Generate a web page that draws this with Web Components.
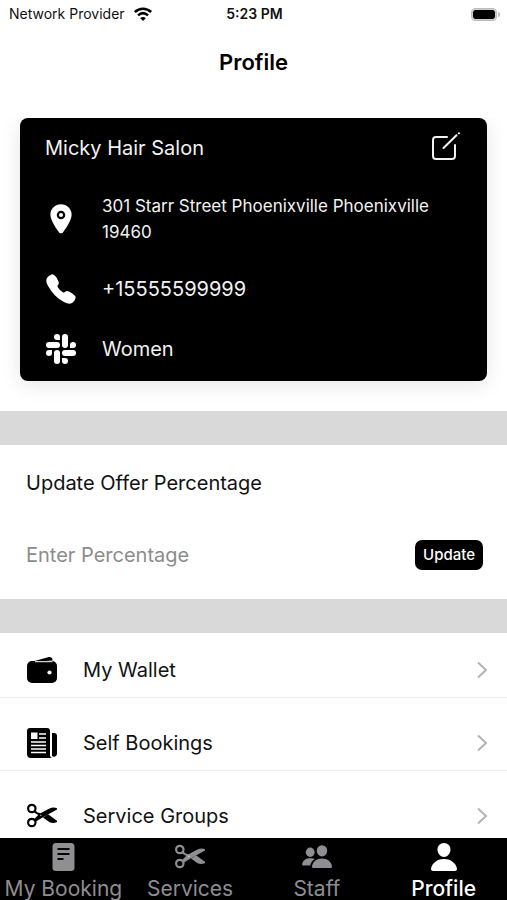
<!DOCTYPE html>
<html lang="en">
<head>
<meta charset="utf-8">
<meta name="viewport" content="width=device-width, initial-scale=1">
<title>Profile</title>
<style>
    html, body {
        height: 100%;
        margin: 0;
    }
    body {
        font-family: Inter, "Liberation Sans", sans-serif;
        font-size: 20px;
        line-height: 26px;
        color: #111;
        background: #fff;
    }
</style>
</head>
<body>
<app-screen>
    <status-bar slot="top" carrier="Network Provider" time="5:23 PM"></status-bar>
    <page-title slot="top">Profile</page-title>

    <salon-card name="Micky Hair Salon">
        <contact-row icon="pin" small>301 Starr Street Phoenixville Phoenixville 19460</contact-row>
        <contact-row icon="phone">+15555599999</contact-row>
        <contact-row icon="slack">Women</contact-row>
    </salon-card>
    <section-band></section-band>
    <offer-form></offer-form>
    <section-band></section-band>
    <menu-list>
        <menu-row icon="wallet">My Wallet</menu-row>
        <menu-row icon="news">Self Bookings</menu-row>
        <menu-row icon="scissors">Service Groups</menu-row>
    </menu-list>

    <tab-bar slot="bottom">
        <tab-item icon="document">My Booking</tab-item>
        <tab-item icon="scissors">Services</tab-item>
        <tab-item icon="people">Staff</tab-item>
        <tab-item icon="person" active>Profile</tab-item>
    </tab-bar>
</app-screen>

<script>
//All the icons live on a 32x32 grid
const icons = {
    pin: `<g transform="scale(.0625)"><circle cx="256" cy="192" r="32"/><path d="M256 20c-94 0-170 72-170 162 0 44 20 98 58 164 30 53 63 98 82 124a37 37 0 0060 0c19-26 52-71 82-124 38-66 58-120 58-164 0-90-76-162-170-162zm0 240a68 68 0 1168-68 68 68 0 01-68 68z"/></g>`,
    phone: `<g transform="scale(.0625)"><path stroke="currentColor" stroke-width="22" d="M391 480c-19.500 0-47-7-88-30-50-28-88.500-54-138-103.400C117 299 93.600 268 61 208.400c-37-67-30.500-102-23.500-117C46 73.400 58 62.600 74 52a176 176 0 0128.700-15.200l2.800-1.200c5-2.200 12.400-5.600 22-2 6.300 2.400 12 7.200 20.800 16 18.200 18 43 57.800 52.200 77.400 6 13.200 10.200 22 10.200 31.700 0 11.500-5.800 20.300-12.700 29.800l-3.900 5.200c-7.600 10-9.300 12.900-8.200 18 2.200 10.400 18.900 41.300 46.200 68.500s57.300 42.900 67.700 45.100c5.400 1.200 8.300-.6 18.700-8.500l4.600-3.400c10.600-8 19-13.600 30.200-13.600 9.800 0 18 4.200 31.900 11.200 18 9 59 33.600 77.100 51.800 8.800 8.800 13.700 14.500 16 20.800 3.600 9.500.2 17-2 22l-1.200 2.700a176 176 0 01-15.300 28.600c-10.600 15.900-21.400 28.200-39.300 36.600A67 67 0 01391 480z"/></g>`,
    slack: `<rect x="17" y="1" width="6" height="14" rx="3"/><path d="M15 7h-3a3 3 0 113-3z"/>
        <rect x="17" y="17" width="14" height="6" rx="3"/><path d="M25 15v-3a3 3 0 113 3z"/>
        <rect x="9" y="17" width="6" height="14" rx="3"/><path d="M17 25h3a3 3 0 11-3 3z"/>
        <rect x="1" y="9" width="14" height="6" rx="3"/><path d="M7 17v3a3 3 0 11-3-3z"/>`,
    edit: `<g fill="none" stroke="currentColor" stroke-width="2" stroke-linecap="round" stroke-linejoin="round"><path d="M17 5H6a3 3 0 00-3 3v16a3 3 0 003 3h16a3 3 0 003-3V13"/><path d="M13.500 16L26.500 3.200"/><path d="M28.800 1.400l.2-.2"/></g>`,
    wallet: `<path d="M4 8.200L22 3.200c2.500-.6 4.500.4 4.700 3.300z"/><path d="M6 7h20a5 5 0 015 5v12a5 5 0 01-5 5H6a5 5 0 01-5-5V12a5 5 0 015-5z"/><path d="M9 7.700h17.500" stroke="#fff" stroke-width="1"/><circle cx="23.500" cy="18.500" r="2.100" fill="#fff"/>`,
    news: `<path d="M4 1h17a3 3 0 013 3v24c0 1.500.8 2.500 2 3H5a4 4 0 01-4-4V4a3 3 0 013-3z"/><path d="M26 6h2a3 3 0 013 3v18a3 3 0 01-5 2z"/>
        <path d="M5 5.500h6.500V12H5z" fill="#fff"/><path d="M13 7h7M13 11h7M5 15h15M5 18.500h15M5 22h15M5 25.500h15" stroke="#fff" stroke-width="1.600"/>`,
    scissors: `<g fill="none" stroke="currentColor" stroke-width="2.200"><circle cx="5.800" cy="8.500" r="3.700"/><circle cx="5.800" cy="22.500" r="3.700"/></g>
        <path d="M8 12.500l1.700-2.500 1.300 2.300 3.500 1L23.500 8.500c2.700-1.300 5.200-1.500 7.500-.2v1.200L16.500 17.500 10 21.500l-2-2.300 4.200-4.200z"/>
        <path d="M17 17.500l5-3.300 9 6.600v1.200c-2.500 1.300-5.200 1.200-7.500.2z"/><circle cx="14.800" cy="15.400" r=".8" fill="#fff" opacity=".6"/>`,
    document: `<path fill-rule="evenodd" d="M9 2h15a3.500 3.500 0 013.500 3.500v21A3.500 3.500 0 0124 30H9a3.500 3.500 0 01-3.500-3.500v-21A3.500 3.500 0 019 2zM10.500 7v2h12V7zm0 5v2h12v-2zm0 5v2h6v-2z"/>`,
    people: `<ellipse cx="21" cy="9.800" rx="5.200" ry="5.600"/><path d="M12.500 27c-1 0-1.700-.8-1.500-1.800C12 20.500 15.500 17.500 21 17.500s9 3 10 7.700c.2 1-.5 1.800-1.500 1.800z"/>
        <ellipse cx="9.200" cy="11.200" rx="4.400" ry="4.700"/><path d="M2.500 24.500c-.9 0-1.500-.7-1.300-1.600C2 19 5 17.200 9.200 17.200c2 0 3.400.3 4.700.9-2.600 1.500-4 3.700-4.700 6.400z"/>`,
    person: `<g transform="scale(.0625)"><path d="M332.600 64.600C313.200 43.600 286 32 256 32c-30.200 0-57.400 11.500-76.800 32.400-19.600 21-29 49.800-26.900 80.800C156.800 206.300 203.300 256 256 256s99.200-49.700 103.700-110.800c2.200-30.700-7.400-59.300-27.100-80.600zM432 480H80a31 31 0 01-24.200-11.100c-6.500-7.800-9-18.400-7.200-29.100C57 393 83.400 353.600 124.800 326c36.800-24.500 83.400-38 131.200-38s94.400 13.500 131.200 38c41.400 27.600 67.700 67 76.200 113.800 2 10.700-.7 21.300-7.200 29A31 31 0 01432 480z"/></g>`,
    chevron: `<path d="M12 8.500l8 7.500-8 7.500" fill="none" stroke="currentColor" stroke-width="2"/>`,
    wifi: `<g fill="none" stroke="currentColor" stroke-width="4.500"><path d="M1.500 12.500c8.500-8 20.500-8 29 0"/><path d="M7 18.500c5.500-5 12.500-5 18 0"/></g><path d="M16 28.500l-5-5c3-2.600 7-2.600 10 0z"/>`
};

//Clone a template into an open shadow root
function attach(host, html) {
    const template = document.createElement("template");
    template.innerHTML = html;
    host.attachShadow({mode: "open"}).appendChild(template.content.cloneNode(true));
}

class UiIcon extends HTMLElement {
    connectedCallback() {
        attach(this, `
        <style>
            :host { display: block; flex: none; width: 32px; height: 32px; }
            svg { display: block; width: 100%; height: 100%; fill: currentColor; }
        </style>
        <svg viewBox="0 0 32 32" aria-hidden="true">${icons[this.getAttribute("name")]}</svg>`);
    }
}

class AppScreen extends HTMLElement {
    constructor() {
        super();
        attach(this, `
        <style>
            :host { display: flex; flex-direction: column; height: 100%; overflow: hidden; }
            main { flex: 1; min-height: 0; overflow: hidden; }
        </style>
        <slot name="top"></slot>
        <main><slot></slot></main>
        <slot name="bottom"></slot>`);
    }
}

class StatusBar extends HTMLElement {
    connectedCallback() {
        attach(this, `
        <style>
            :host {
                display: grid;
                grid-template-columns: 1fr auto 1fr;
                align-items: center;
                height: 28px;
                padding: 0 7px 0 9px;
                font-size: 14px;
                line-height: 20px;
            }
            .carrier { display: flex; align-items: center; gap: 8px; }
            .carrier ui-icon { width: 20px; height: 18px; color: #000; }
            .time { font-weight: 600; }
            .battery { display: flex; align-items: center; justify-content: flex-end; }
            .cell { width: 22px; height: 9px; padding: 1px; border: 1px solid #bbb; border-radius: 4px; background: #000 content-box; box-shadow: inset 0 0 0 1px #ccc; }
            .tip { width: 2px; height: 5px; margin-left: 1px; border-radius: 0 2px 2px 0; background: #bbb; }
        </style>
        <div class="carrier"><span>${this.getAttribute("carrier")}</span><ui-icon name="wifi"></ui-icon></div>
        <div class="time">${this.getAttribute("time")}</div>
        <div class="battery"><div class="cell"></div><div class="tip"></div></div>`);
    }
}

class PageTitle extends HTMLElement {
    constructor() {
        super();
        attach(this, `
        <style>
            :host { display: block; padding: 20px 0 42px; text-align: center; color: #000; }
            h1 { margin: 0; font-size: 22px; line-height: 28px; font-weight: 600; }
        </style>
        <h1><slot></slot></h1>`);
    }
}

class SalonCard extends HTMLElement {
    connectedCallback() {
        attach(this, `
        <style>
            :host { display: block; padding: 0 20px 30px; }
            article {
                padding: 14px 25px 16px;
                border-radius: 8px;
                background: #000;
                color: #f2f2f2;
                box-shadow: 0 4px 20px rgba(0, 0, 0, .1);
            }
            header { display: flex; align-items: center; justify-content: space-between; }
            h2 { margin: 0; font-size: 20px; line-height: 32px; font-weight: 400; }
            button { padding: 0; border: 0; background: none; color: inherit; }
            .rows { display: grid; gap: 28px; margin-top: 29px; }
        </style>
        <article>
            <header>
                <h2>${this.getAttribute("name")}</h2>
                <button type="button" aria-label="Edit profile"><ui-icon name="edit"></ui-icon></button>
            </header>
            <div class="rows"><slot></slot></div>
        </article>`);
    }
}

class ContactRow extends HTMLElement {
    connectedCallback() {
        attach(this, `
        <style>
            :host { display: flex; align-items: center; gap: 25px; line-height: 32px; }
            :host([small]) { font-size: 17px; line-height: 26px; }
            ui-icon { color: #fff; }
        </style>
        <ui-icon name="${this.getAttribute("icon")}"></ui-icon>
        <div><slot></slot></div>`);
    }
}

class SectionBand extends HTMLElement {
    constructor() {
        super();
        attach(this, `<style>:host { display: block; height: 34px; background: #d9d9d9; }</style>`);
    }
}

class OfferForm extends HTMLElement {
    constructor() {
        super();
        attach(this, `
        <style>
            :host { display: block; padding: 25px 24px 29px 26px; }
            form { display: grid; gap: 44px; }
            .field { display: flex; align-items: center; gap: 16px; }
            input {
                flex: 1;
                min-width: 0;
                height: 30px;
                padding: 0;
                border: 0;
                background: none;
                font: inherit;
                color: inherit;
            }
            input::placeholder { color: #8c8c8c; }
            button {
                height: 30px;
                padding: 0 8px;
                border: 0;
                border-radius: 7px;
                background: #000;
                color: #fff;
                font: 500 15px/20px Inter, sans-serif;
            }
        </style>
        <form>
            <label for="percentage">Update Offer Percentage</label>
            <div class="field">
                <input id="percentage" type="text" inputmode="decimal" placeholder="Enter Percentage">
                <button type="button">Update</button>
            </div>
        </form>`);
    }
}

class MenuList extends HTMLElement {
    constructor() {
        super();
        attach(this, `
        <style>:host { display: grid; gap: 8px; }</style>
        <slot></slot>`);
    }
}

class MenuRow extends HTMLElement {
    connectedCallback() {
        attach(this, `
        <style>
            :host { display: block; border-bottom: 1px solid #ececec; }
            a {
                display: flex;
                align-items: center;
                gap: 25px;
                height: 54px;
                padding: 10px 9px 0 26px;
                color: inherit;
                text-decoration: none;
            }
            span { flex: 1; }
            .icon { color: #000; }
            .go { color: #b4b4b4; }
        </style>
        <a href="#">
            <ui-icon class="icon" name="${this.getAttribute("icon")}"></ui-icon>
            <span><slot></slot></span>
            <ui-icon class="go" name="chevron"></ui-icon>
        </a>`);
    }
}

class TabBar extends HTMLElement {
    constructor() {
        super();
        attach(this, `
        <style>
            nav { display: grid; grid-template-columns: repeat(4, 1fr); height: 62px; overflow: hidden; background: #000; }
        </style>
        <nav><slot></slot></nav>`);
    }
}

class TabItem extends HTMLElement {
    connectedCallback() {
        attach(this, `
        <style>
            :host { display: block; font-size: 21px; color: #8e8e93; }
            :host([active]) { color: #fff; }
            :host([active]) a { font-weight: 500; }
            a {
                display: flex;
                flex-direction: column;
                align-items: center;
                gap: 3px;
                padding-top: 3px;
                color: inherit;
                text-decoration: none;
                white-space: nowrap;
            }
        </style>
        <a href="#">
            <ui-icon name="${this.getAttribute("icon")}"></ui-icon>
            <span><slot></slot></span>
        </a>`);
    }
}

customElements.define("ui-icon", UiIcon);
customElements.define("app-screen", AppScreen);
customElements.define("status-bar", StatusBar);
customElements.define("page-title", PageTitle);
customElements.define("salon-card", SalonCard);
customElements.define("contact-row", ContactRow);
customElements.define("section-band", SectionBand);
customElements.define("offer-form", OfferForm);
customElements.define("menu-list", MenuList);
customElements.define("menu-row", MenuRow);
customElements.define("tab-bar", TabBar);
customElements.define("tab-item", TabItem);
</script>
</body>
</html>
